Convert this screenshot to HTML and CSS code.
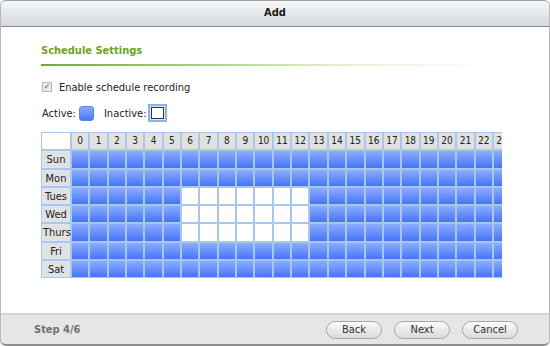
FILE: index.html
```html
<!DOCTYPE html>
<html>
<head>
    <title>Add</title>
    <link rel="stylesheet" href="styles.css">
</head>
<body>
    <div class="dialog">
        <div class="titlebar">Add</div>

        <div class="content">
            <div class="section-title">Schedule Settings</div>
            <div class="section-line"></div>

            <label class="check-row">
                <span class="checkbox">&#10003;</span>
                Enable schedule recording
            </label>

            <div class="legend">
                <span>Active:</span>
                <span class="swatch-active"></span>
                <span class="legend-gap">Inactive:</span>
                <span class="swatch-inactive"><span></span></span>
            </div>

            <div class="grid-wrap">
                <div class="grid">
                    <div class="corner"></div>
                    <div class="hour">0</div><div class="hour">1</div><div class="hour">2</div><div class="hour">3</div>
                    <div class="hour">4</div><div class="hour">5</div><div class="hour">6</div><div class="hour">7</div>
                    <div class="hour">8</div><div class="hour">9</div><div class="hour">10</div><div class="hour">11</div>
                    <div class="hour">12</div><div class="hour">13</div><div class="hour">14</div><div class="hour">15</div>
                    <div class="hour">16</div><div class="hour">17</div><div class="hour">18</div><div class="hour">19</div>
                    <div class="hour">20</div><div class="hour">21</div><div class="hour">22</div><div class="hour">23</div>

                    <div class="day">Sun</div>
                    <div class="on"></div><div class="on"></div><div class="on"></div><div class="on"></div><div class="on"></div><div class="on"></div>
                    <div class="on"></div><div class="on"></div><div class="on"></div><div class="on"></div><div class="on"></div><div class="on"></div>
                    <div class="on"></div><div class="on"></div><div class="on"></div><div class="on"></div><div class="on"></div><div class="on"></div>
                    <div class="on"></div><div class="on"></div><div class="on"></div><div class="on"></div><div class="on"></div><div class="on"></div>

                    <div class="day">Mon</div>
                    <div class="on"></div><div class="on"></div><div class="on"></div><div class="on"></div><div class="on"></div><div class="on"></div>
                    <div class="on"></div><div class="on"></div><div class="on"></div><div class="on"></div><div class="on"></div><div class="on"></div>
                    <div class="on"></div><div class="on"></div><div class="on"></div><div class="on"></div><div class="on"></div><div class="on"></div>
                    <div class="on"></div><div class="on"></div><div class="on"></div><div class="on"></div><div class="on"></div><div class="on"></div>

                    <div class="day">Tues</div>
                    <div class="on"></div><div class="on"></div><div class="on"></div><div class="on"></div><div class="on"></div><div class="on"></div>
                    <div class="off"></div><div class="off"></div><div class="off"></div><div class="off"></div><div class="off"></div><div class="off"></div>
                    <div class="off"></div><div class="on"></div><div class="on"></div><div class="on"></div><div class="on"></div><div class="on"></div>
                    <div class="on"></div><div class="on"></div><div class="on"></div><div class="on"></div><div class="on"></div><div class="on"></div>

                    <div class="day">Wed</div>
                    <div class="on"></div><div class="on"></div><div class="on"></div><div class="on"></div><div class="on"></div><div class="on"></div>
                    <div class="off"></div><div class="off"></div><div class="off"></div><div class="off"></div><div class="off"></div><div class="off"></div>
                    <div class="off"></div><div class="on"></div><div class="on"></div><div class="on"></div><div class="on"></div><div class="on"></div>
                    <div class="on"></div><div class="on"></div><div class="on"></div><div class="on"></div><div class="on"></div><div class="on"></div>

                    <div class="day">Thurs</div>
                    <div class="on"></div><div class="on"></div><div class="on"></div><div class="on"></div><div class="on"></div><div class="on"></div>
                    <div class="off"></div><div class="off"></div><div class="off"></div><div class="off"></div><div class="off"></div><div class="off"></div>
                    <div class="off"></div><div class="on"></div><div class="on"></div><div class="on"></div><div class="on"></div><div class="on"></div>
                    <div class="on"></div><div class="on"></div><div class="on"></div><div class="on"></div><div class="on"></div><div class="on"></div>

                    <div class="day">Fri</div>
                    <div class="on"></div><div class="on"></div><div class="on"></div><div class="on"></div><div class="on"></div><div class="on"></div>
                    <div class="on"></div><div class="on"></div><div class="on"></div><div class="on"></div><div class="on"></div><div class="on"></div>
                    <div class="on"></div><div class="on"></div><div class="on"></div><div class="on"></div><div class="on"></div><div class="on"></div>
                    <div class="on"></div><div class="on"></div><div class="on"></div><div class="on"></div><div class="on"></div><div class="on"></div>

                    <div class="day">Sat</div>
                    <div class="on"></div><div class="on"></div><div class="on"></div><div class="on"></div><div class="on"></div><div class="on"></div>
                    <div class="on"></div><div class="on"></div><div class="on"></div><div class="on"></div><div class="on"></div><div class="on"></div>
                    <div class="on"></div><div class="on"></div><div class="on"></div><div class="on"></div><div class="on"></div><div class="on"></div>
                    <div class="on"></div><div class="on"></div><div class="on"></div><div class="on"></div><div class="on"></div><div class="on"></div>
                </div>
            </div>
        </div>

        <div class="footer">
            <span class="step">Step 4/6</span>
            <div class="buttons">
                <button class="btn">Back</button>
                <button class="btn">Next</button>
                <button class="btn">Cancel</button>
            </div>
        </div>
    </div>
</body>
</html>
```

FILE: styles.css
```css
body {
    margin: 0;
    background: #ffffff;
    font-family: "DejaVu Sans Condensed", "DejaVu Sans", sans-serif;
    font-size: 11px;
    color: #222222;
}
.dialog {
    width: 550px;
    height: 346px;
    display: flex;
    flex-direction: column;
    box-sizing: border-box;
    border-left: 1px solid #b8b8b8;
    border-right: 1px solid #b8b8b8;
    border-radius: 5px;
    overflow: hidden;
}
.titlebar {
    height: 25px;
    line-height: 24px;
    text-align: center;
    font-weight: bold;
    font-size: 11px;
    color: #1a1a1a;
    background: linear-gradient(#f5f6f7, #d5dae0);
    border-top: 1px solid #a0a0a0;
    border-bottom: 1px solid #85898f;
    border-radius: 5px 5px 0 0;
}
.content {
    flex: 1;
    padding: 17px 0 0 40px;
}
.section-title {
    color: #6aa521;
    font-weight: bold;
    font-size: 11px;
    line-height: 14px;
}
.section-line {
    height: 2px;
    margin-top: 6px;
    width: 500px;
    background: linear-gradient(to right, #6fae2a, #b9dc8e 40%, #e3f0d4 60%, rgba(255, 255, 255, 0) 90%);
}
.check-row {
    display: flex;
    align-items: center;
    gap: 7px;
    margin-top: 13px;
    height: 16px;
    padding-left: 1px;
}
.checkbox {
    width: 8px;
    height: 8px;
    border: 1px solid #b8b8b8;
    background: #e8e8e8;
    font-size: 8px;
    line-height: 8px;
    text-align: center;
    color: #555555;
}
.legend {
    display: flex;
    align-items: center;
    height: 20px;
    margin-top: 8px;
    padding-left: 1px;
}
.swatch-active {
    width: 13px;
    height: 13px;
    margin-left: 3px;
    border: 1px solid #5b86e6;
    border-radius: 3px;
    background: linear-gradient(#8aabff, #4a78fd);
}
.legend-gap {
    margin-left: 10px;
}
.swatch-inactive {
    width: 19px;
    height: 18px;
    margin-left: 1px;
    box-sizing: border-box;
    border: 2px solid #8db4dc;
    background: #d9e7f5;
    display: flex;
    align-items: center;
    justify-content: center;
}
.swatch-inactive span {
    width: 11px;
    height: 10px;
    border: 1px solid #333333;
    background: #ffffff;
}
.grid-wrap {
    width: 461px;
    overflow: hidden;
    margin-top: 9px;
}
.grid {
    display: grid;
    grid-template-columns: 28px repeat(24, 16.35px);
    grid-auto-rows: 16.25px;
    gap: 2px;
    padding: 1px;
    width: max-content;
    background: #a9c6eb;
}
.corner {
    background: #ffffff;
}
.hour {
    background: #e1e1e1;
    text-align: center;
    line-height: 16px;
    font-size: 10px;
    color: #222222;
}
.day {
    background: #e1e1e1;
    text-align: center;
    line-height: 15px;
    font-size: 11px;
    color: #222222;
    border: 1px solid #d9e6f6;
}
.on {
    background: linear-gradient(#8badfc, #4674fb);
}
.off {
    background: #ffffff;
}
.footer {
    height: 29px;
    display: flex;
    align-items: center;
    justify-content: space-between;
    padding: 0 31px 0 33px;
    background: #e6e6e6;
    border-top: 2px solid #d4d4d4;
    border-bottom: 2px solid #8c8c8c;
    border-radius: 0 0 5px 5px;
}
.step {
    font-weight: bold;
    color: #707070;
}
.buttons {
    display: flex;
    gap: 12px;
}
.btn {
    width: 56px;
    height: 18px;
    padding: 0;
    font-family: "DejaVu Sans Condensed", "DejaVu Sans", sans-serif;
    font-size: 11px;
    color: #333333;
    border: 1px solid #a8a8a8;
    border-radius: 9px;
    background: linear-gradient(#fbfbfb, #dadada);
}
```
